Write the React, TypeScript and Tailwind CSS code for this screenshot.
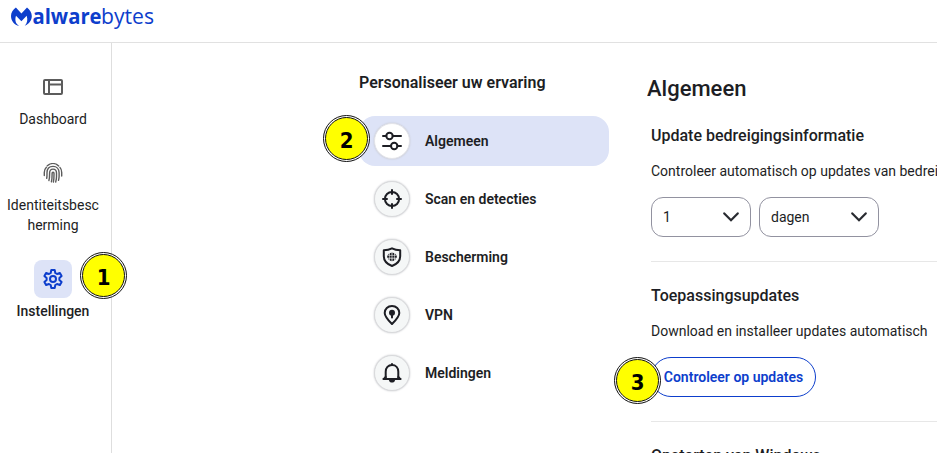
import React from 'react';

const LogoMark = () => (
  <svg className="h-5 w-[22px] fill-[#0d3ecc]" viewBox="0 0 22 20">
    <path d="M5.9 0.5 11.4 6.6 17 0.5C19.6 2.6 21.8 5.4 21.8 9C21.8 13.3 19.2 17 14.8 18.7C17.2 16.2 18 12.8 16.7 8.7L11.4 14.2 6 8.7C4.6 13 5.6 16.7 9.2 19C4.3 18 1 13.8 1 8.9C1 5.4 3 2.6 5.9 0.5Z" />
  </svg>
);

const DashboardIcon = () => (
  <svg className="h-5 w-5 fill-none stroke-[#5c5c5c] stroke-2" viewBox="0 0 20 20">
    <rect x="1" y="3" width="18" height="14" rx="1" />
    <path d="M6 3V17M6 7.5H19" />
  </svg>
);

const FingerprintIcon = () => (
  <svg className="h-5 w-5 fill-none stroke-[#5c5c5c] stroke-[1.4]" strokeLinecap="round" viewBox="0 0 20 20">
    <path d="M4.3 2.7C7.8-.2 12.4-.1 15.7 2.9" />
    <path d="M1.3 12.6V9.5C1.3 7.2 2 5.5 3.4 4.2M16.9 4.4C18.1 5.7 18.7 7.3 18.7 9.4V13" />
    <path d="M3.7 15.4C4.1 13.7 4 11.7 4 9.8C4 5.8 6.5 3.4 10 3.4C13.7 3.4 16.1 6 16.1 9.7V13.3C16.1 14.8 15.8 16.1 15.5 17.3" />
    <path d="M5.9 17.5C6.7 15 6.6 12.5 6.6 10C6.6 7.5 7.8 6.1 10 6.1C12.3 6.1 13.5 7.6 13.5 10V13.8C13.5 15.8 13.2 17.4 12.7 19" />
    <path d="M8.4 18.8C9.2 16.3 9.1 13 9.1 10.2C9.1 9 11 9 11 10.2C11 13.2 11.1 16.4 10.4 19" />
  </svg>
);

const GearIcon = () => (
  <svg className="h-5 w-5 fill-none stroke-[#0d3ecc] stroke-2" strokeLinejoin="round" viewBox="0 0 20 20">
    <path d="M8.3 1H11.7L12.3 4L14 5L16.9 4L18.6 7L16.4 9V11L18.6 13L16.9 16L14 15L12.3 16L11.7 19H8.3L7.7 16L6 15L3.1 16L1.4 13L3.6 11V9L1.4 7L3.1 4L6 5L7.7 4Z" />
    <circle cx="10" cy="10" r="3" />
  </svg>
);

const SlidersIcon = () => (
  <>
    <path d="M1 5H4.3M10.7 5H19M1 15H9M15.4 15H19" />
    <circle cx="7.5" cy="5" r="3.2" />
    <circle cx="12.2" cy="15" r="3.2" />
  </>
);

const TargetIcon = () => (
  <>
    <circle cx="10" cy="10" r="7.1" />
    <path d="M10 1V5M10 15V19M1 10H5M15 10H19" />
  </>
);

const ShieldIcon = () => (
  <>
    <path d="M10 1.3C12.8 2.7 15.2 3.1 18.2 3.2V9.2C18.2 13.8 15.3 16.9 10 19C4.7 16.9 1.8 13.8 1.8 9.2V3.2C4.8 3.1 7.2 2.7 10 1.3Z" />
    <g fill="currentColor" stroke="none">
      <path d="M5.2 8.6H7.1V10.8H5.2ZM7.6 8.6H9.7V10.8H7.6ZM10.3 8.6H12.4V10.8H10.3ZM12.9 8.6H14.8V10.8H12.9Z" />
      <path d="M7.8 6.2 9.6 5.4V8H7.6ZM10.4 5.4 12.2 6.2 12.4 8H10.4ZM7.6 11.5H9.6V14.3L7.8 13.5ZM10.4 11.5H12.4L12.2 13.5 10.4 14.3Z" />
      <path d="M5.8 8 6.8 6.6V8ZM13.2 6.6 14.2 8H13.2ZM5.8 11.5H6.8V13.1ZM13.2 11.5H14.2L13.2 13.1Z" />
    </g>
  </>
);

const PinIcon = () => (
  <>
    <path d="M10 19C5.5 14.5 2.7 11.5 2.7 7.9C2.7 3.9 5.8 1 10 1C14.2 1 17.3 3.9 17.3 7.9C17.3 11.5 14.5 14.5 10 19Z" />
    <circle cx="10" cy="7.7" r="3" fill="currentColor" stroke="none" />
    <path d="M10 8V12.5" />
  </>
);

const BellIcon = () => (
  <>
    <path d="M1.4 16H18.6M3.7 16V8.7C3.7 4.9 6.2 2 10 2C13.8 2 16.3 4.9 16.3 8.7V16" />
    <path d="M10 1V2M2.3 15.5 3.7 14M17.7 15.5 16.3 14" />
    <path d="M6.9 17H13.1C12.7 18.9 11.6 19.6 10 19.6C8.4 19.6 7.3 18.9 6.9 17Z" fill="currentColor" stroke="none" />
  </>
);

interface StepBadgeProps {
  step: number;
  className: string;
}

const StepBadge: React.FC<StepBadgeProps> = ({ step, className }) => (
  <div className={`absolute z-10 h-[47px] w-[47px] rounded-full border border-[#111] bg-white p-px ${className}`}>
    <div className="flex h-full w-full items-center justify-center rounded-full border-[1.5px] border-[#111] bg-[#ffff00] pt-1 font-['DejaVu_Sans',sans-serif] text-[22px] leading-none font-bold text-black">
      <span className="scale-x-90">{step}</span>
    </div>
  </div>
);

const categories = [
  { label: 'Algemeen', icon: SlidersIcon, active: true },
  { label: 'Scan en detecties', icon: TargetIcon },
  { label: 'Bescherming', icon: ShieldIcon },
  { label: 'VPN', icon: PinIcon },
  { label: 'Meldingen', icon: BellIcon },
];

interface SelectBoxProps {
  value: string;
  className: string;
}

const SelectBox: React.FC<SelectBoxProps> = ({ value, className }) => (
  <button className={`flex h-10 items-center justify-between rounded-xl border border-[#9292a0] px-[11px] text-sm ${className}`}>
    <span>{value}</span>
    <svg className="h-4 w-4 fill-none stroke-[#282a30] stroke-[2.2]" strokeLinecap="round" viewBox="0 0 16 16">
      <path d="M1.3 4.4 8 11.2 14.7 4.4" />
    </svg>
  </button>
);

const App: React.FC = () => {
  return (
    <div className="relative flex h-[453px] w-[937px] flex-col overflow-hidden bg-white font-['Roboto',sans-serif] text-[#1d1e24]">
      <header className="flex h-[43px] shrink-0 border-b border-[#e1e1e1] pt-[7px] pl-2.5">
        <LogoMark />
        <svg className="h-7 w-[124px] overflow-visible fill-[#0d3ecc] font-['Open_Sans',sans-serif] text-[21.5px]" viewBox="0 0 124 28">
          <text x="0.5" y="16.6" textLength="69" lengthAdjust="spacingAndGlyphs" className="font-bold">alware</text>
          <text x="69" y="16.6" textLength="53" lengthAdjust="spacingAndGlyphs">bytes</text>
        </svg>
      </header>

      <div className="flex min-h-0 flex-1">
        <nav className="flex w-28 shrink-0 flex-col items-center border-r border-[#dedede] pr-[5px] pt-[34px] text-center text-sm leading-5">
          <div className="flex flex-col items-center gap-3">
            <DashboardIcon />
            <span>Dashboard</span>
          </div>
          <div className="mt-[34px] flex flex-col items-center gap-3">
            <FingerprintIcon />
            <span>Identiteitsbesc<br />herming</span>
          </div>
          <div className="mt-[25px] flex flex-col items-center gap-[3px]">
            <div className="flex h-[38px] w-[38px] items-center justify-center rounded-lg bg-[#dde3f7]">
              <GearIcon />
            </div>
            <span className="font-medium">Instellingen</span>
          </div>
        </nav>

        <section className="ml-[247px] w-[250px] shrink-0 pt-[30px]">
          <h2 className="text-base leading-5 font-semibold">Personaliseer uw ervaring</h2>
          <ul className="mt-[23px] flex flex-col gap-2">
            {categories.map(({ label, icon: Icon, active }) => (
              <li key={label} className={`flex h-[50px] items-center rounded-2xl pl-[15px] ${active ? 'bg-[#dde3f7]' : ''}`}>
                <span className={`flex h-9 w-9 items-center justify-center rounded-full border shadow-[0_0_2px_#c4c5ca] ${active ? 'border-[#e3e4ea] bg-white' : 'border-[#d9dadc] bg-[#f5f7f7]'}`}>
                  <svg className="h-5 w-5 fill-none stroke-current stroke-2" strokeLinecap="round" strokeLinejoin="round" viewBox="0 0 20 20">
                    <Icon />
                  </svg>
                </span>
                <span className="ml-[15px] text-sm font-semibold">{label}</span>
              </li>
            ))}
          </ul>
        </section>

        <main className="ml-[38px] flex-1 overflow-hidden pt-8 whitespace-nowrap">
          <h1 className="text-[22px] leading-7 font-medium">Algemeen</h1>
          <div className="ml-1">
            <section className="h-[159px] border-b border-[#e7e7e7] pt-[23px]">
              <h3 className="text-base leading-5 font-medium">Update bedreigingsinformatie</h3>
              <p className="mt-[15px] text-sm leading-5">Controleer automatisch op updates van bedreigingsinformatie</p>
              <div className="mt-4 flex gap-2">
                <SelectBox value="1" className="w-[100px]" />
                <SelectBox value="dagen" className="w-[120px]" />
              </div>
            </section>
            <section className="h-[160px] border-b border-[#e7e7e7] pt-6">
              <h3 className="text-base leading-5 font-medium">Toepassingsupdates</h3>
              <p className="mt-[15px] text-sm leading-5">Download en installeer updates automatisch</p>
              <button className="mt-4 h-10 w-[165px] rounded-full border border-[#0d3ecc] text-sm font-semibold text-[#0d3ecc]">
                Controleer op updates
              </button>
            </section>
            <section className="pt-6">
              <h3 className="text-base leading-5 font-medium">Opstarten van Windows</h3>
            </section>
          </div>
        </main>
      </div>

      <StepBadge step={1} className="top-[252px] left-[80px]" />
      <StepBadge step={2} className="top-[115px] left-[323px]" />
      <StepBadge step={3} className="top-[357px] left-[614px]" />
    </div>
  );
};

export default App;
